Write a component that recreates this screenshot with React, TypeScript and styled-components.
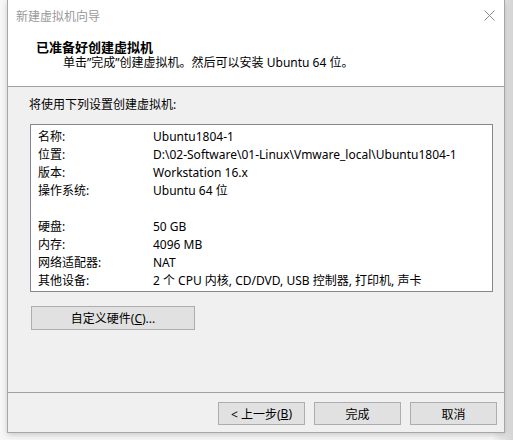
import React from 'react';
import styled, { createGlobalStyle } from 'styled-components';

const GlobalStyle = createGlobalStyle`
  html, body {
    margin: 0;
    padding: 0;
    background: #f6f6f6;
  }
  body {
    font-family: "Noto Sans", "Noto Sans CJK SC", sans-serif;
    font-size: 12px;
    color: #000;
  }
`;

const Page = styled.div`
  width: 513px;
  height: 440px;
  overflow: hidden;
  background: linear-gradient(90deg, #f7f7f7 0%, #f7f7f7 96%, #d4d4d4 100%);
`;

const Window = styled.div`
  margin-left: 7px;
  width: 498px;
  height: 433px;
  box-sizing: border-box;
  border: 1px solid #a6a6a6;
  border-top: none;
  background: #f0f0f0;
  display: flex;
  flex-direction: column;
  box-shadow: 0 2px 6px rgba(0, 0, 0, 0.18);
`;

const TitleBar = styled.div`
  height: 31px;
  background: #fff;
  display: flex;
  align-items: center;
  justify-content: space-between;
  padding: 0 9px 0 8px;
  color: #999;
`;

const CloseIcon = styled.svg`
  width: 11px;
  height: 11px;
`;

const Header = styled.div`
  height: 56px;
  background: #fff;
  border-bottom: 1px solid #a0a0a0;
  box-sizing: border-box;
  padding: 8px 0 0 28px;
  display: flex;
  flex-direction: column;
`;

const HeaderTitle = styled.div`
  font-weight: bold;
  font-size: 13px;
  line-height: 16px;
`;

const HeaderSub = styled.div`
  padding-left: 27px;
  line-height: 15px;
`;

const Body = styled.div`
  flex: 1;
  padding: 10px 0 0 21px;
  display: flex;
  flex-direction: column;
`;

const Intro = styled.div`
  line-height: 16px;
`;

const SummaryBox = styled.div`
  margin: 11px 0 0 1px;
  width: 463px;
  height: 168px;
  box-sizing: border-box;
  border: 1px solid #828790;
  background: #fff;
  padding: 3px 0 0 7px;
`;

const Row = styled.div`
  display: grid;
  grid-template-columns: 115px 1fr;
  height: 18px;
  line-height: 18px;
  white-space: nowrap;
`;

const Button = styled.button<{ $width?: number }>`
  width: ${(p) => p.$width ?? 87}px;
  height: 23px;
  box-sizing: border-box;
  border: 1px solid #adadad;
  background: #e1e1e1;
  font: inherit;
  font-size: 12px;
  color: #000;
  padding: 0;
  display: flex;
  align-items: center;
  justify-content: center;
`;

const CustomButton = styled(Button)`
  margin: 14px 0 0 2px;
  height: 24px;
`;

const Footer = styled.div`
  border-top: 1px solid #a0a0a0;
  height: 40px;
  box-sizing: border-box;
  display: flex;
  justify-content: flex-end;
  gap: 9px;
  padding: 9px 7px 0 0;
`;

const Key = styled.span`
  text-decoration: underline;
`;

const rows: [string, string][] = [
  ['名称:', 'Ubuntu1804-1'],
  ['位置:', 'D:\\02-Software\\01-Linux\\Vmware_local\\Ubuntu1804-1'],
  ['版本:', 'Workstation 16.x'],
  ['操作系统:', 'Ubuntu 64 位'],
  ['', ''],
  ['硬盘:', '50 GB'],
  ['内存:', '4096 MB'],
  ['网络适配器:', 'NAT'],
  ['其他设备:', '2 个 CPU 内核, CD/DVD, USB 控制器, 打印机, 声卡'],
];

export default function App() {
  return (
    <Page>
      <GlobalStyle />
      <Window>
        <TitleBar>
          <span>新建虚拟机向导</span>
          <CloseIcon viewBox="0 0 11 11">
            <path d="M0.5 0.5 L10.5 10.5 M10.5 0.5 L0.5 10.5" stroke="#8a8a8a" strokeWidth="1" fill="none" />
          </CloseIcon>
        </TitleBar>
        <Header>
          <HeaderTitle>已准备好创建虚拟机</HeaderTitle>
          <HeaderSub>单击”完成”创建虚拟机。然后可以安装 Ubuntu 64 位。</HeaderSub>
        </Header>
        <Body>
          <Intro>将使用下列设置创建虚拟机:</Intro>
          <SummaryBox>
            {rows.map(([k, v], i) => (
              <Row key={i}>
                <span>{k}</span>
                <span>{v}</span>
              </Row>
            ))}
          </SummaryBox>
          <CustomButton $width={164}>
            自定义硬件(<Key>C</Key>)...
          </CustomButton>
        </Body>
        <Footer>
          <Button>
            &lt; 上一步(<Key>B</Key>)
          </Button>
          <Button>完成</Button>
          <Button>取消</Button>
        </Footer>
      </Window>
    </Page>
  );
}
